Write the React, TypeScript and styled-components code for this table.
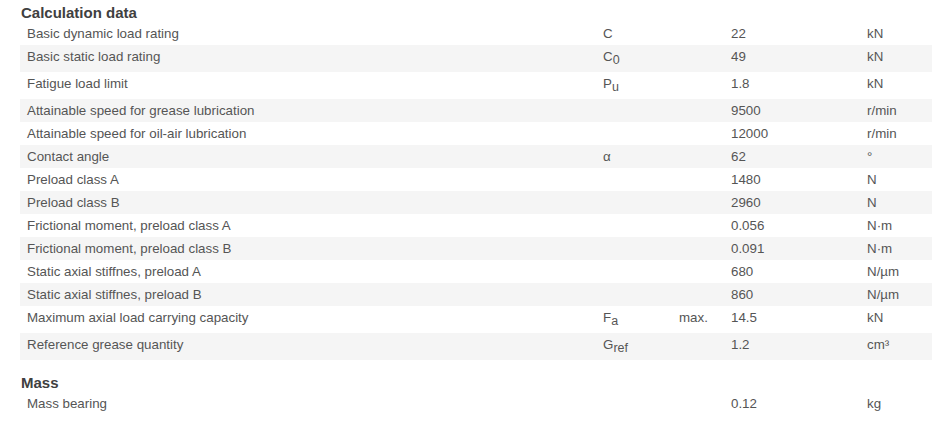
import React from "react";
import styled, { createGlobalStyle } from "styled-components";

type Row = {
  name: string;
  symbol?: string;
  sub?: string;
  qualifier?: string;
  value: string;
  unit: string;
};

const calculation: Row[] = [
  { name: "Basic dynamic load rating", symbol: "C", value: "22", unit: "kN" },
  { name: "Basic static load rating", symbol: "C", sub: "0", value: "49", unit: "kN" },
  { name: "Fatigue load limit", symbol: "P", sub: "u", value: "1.8", unit: "kN" },
  { name: "Attainable speed for grease lubrication", value: "9500", unit: "r/min" },
  { name: "Attainable speed for oil-air lubrication", value: "12000", unit: "r/min" },
  { name: "Contact angle", symbol: "α", value: "62", unit: "°" },
  { name: "Preload class A", value: "1480", unit: "N" },
  { name: "Preload class B", value: "2960", unit: "N" },
  { name: "Frictional moment, preload class A", value: "0.056", unit: "N·m" },
  { name: "Frictional moment, preload class B", value: "0.091", unit: "N·m" },
  { name: "Static axial stiffnes, preload A", value: "680", unit: "N/µm" },
  { name: "Static axial stiffnes, preload B", value: "860", unit: "N/µm" },
  {
    name: "Maximum axial load carrying capacity",
    symbol: "F",
    sub: "a",
    qualifier: "max.",
    value: "14.5",
    unit: "kN",
  },
  { name: "Reference grease quantity", symbol: "G", sub: "ref", value: "1.2", unit: "cm³" },
];

const mass: Row[] = [{ name: "Mass bearing", value: "0.12", unit: "kg" }];

const GlobalStyle = createGlobalStyle`
  html, body {
    margin: 0;
    padding: 0;
    background: #fff;
  }
  body {
    font-family: "Liberation Sans", Arial, sans-serif;
    color: #555;
    overflow: hidden;
  }
`;

const Page = styled.div`
  padding: 4px 0 0 20px;
`;

const Section = styled.section`
  & + & {
    margin-top: 14px;
  }
`;

const Heading = styled.h3`
  margin: 0;
  padding-left: 1px;
  font-size: 15px;
  line-height: 18px;
  font-weight: bold;
  color: #404040;
`;

const Table = styled.table`
  width: 100%;
  border-collapse: collapse;
  table-layout: fixed;
  font-size: 13.33px;
  line-height: 15px;
`;

const TableRow = styled.tr<{ $striped: boolean; $tall: boolean }>`
  background: ${(p) => (p.$striped ? "#f5f5f5" : "#fff")};

  td {
    padding-bottom: ${(p) => (p.$tall ? "8px" : "4px")};
  }
`;

const Cell = styled.td`
  padding: 4px 0 4px 7px;
  vertical-align: top;
  white-space: nowrap;
`;

const Sub = styled.sub`
  font-size: 12.5px;
  vertical-align: -3px;
  line-height: 0;
`;

const DataTable = ({ rows }: { rows: Row[] }) => (
  <Table>
    <colgroup>
      <col style={{ width: 576 }} />
      <col style={{ width: 76 }} />
      <col style={{ width: 52 }} />
      <col style={{ width: 136 }} />
      <col />
    </colgroup>
    <tbody>
      {rows.map((r, i) => (
        <TableRow key={r.name} $striped={i % 2 === 1} $tall={!!r.sub}>
          <Cell>{r.name}</Cell>
          <Cell>
            {r.symbol}
            {r.sub && <Sub>{r.sub}</Sub>}
          </Cell>
          <Cell>{r.qualifier}</Cell>
          <Cell>{r.value}</Cell>
          <Cell>{r.unit}</Cell>
        </TableRow>
      ))}
    </tbody>
  </Table>
);

export default function App() {
  return (
    <>
      <GlobalStyle />
      <Page>
        <Section>
          <Heading>Calculation data</Heading>
          <DataTable rows={calculation} />
        </Section>
        <Section>
          <Heading>Mass</Heading>
          <DataTable rows={mass} />
        </Section>
      </Page>
    </>
  );
}
